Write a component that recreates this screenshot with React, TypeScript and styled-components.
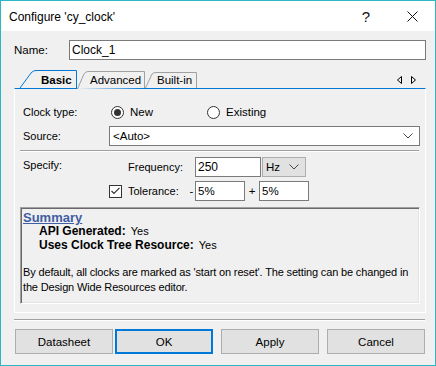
import React, { useState } from 'react';
import styled, { createGlobalStyle } from 'styled-components';

const GlobalStyle = createGlobalStyle`
  html, body {
    margin: 0;
    padding: 0;
    background: #ffffff;
  }
  * {
    box-sizing: border-box;
  }
`;

const Window = styled.div`
  width: 436px;
  height: 366px;
  border: 1px solid #2cb7c7;
  display: flex;
  flex-direction: column;
  font-family: 'Liberation Sans', Arial, sans-serif;
  font-size: 11px;
  color: #000;
  overflow: hidden;
`;

const TitleBar = styled.div`
  height: 30px;
  background: #ffffff;
  display: flex;
  align-items: center;
  padding-left: 8px;
  flex-shrink: 0;
`;

const Title = styled.div`
  flex: 1;
  font-size: 12px;
  padding-top: 1px;
`;

const CaptionButton = styled.div`
  width: 46px;
  height: 30px;
  display: flex;
  align-items: center;
  justify-content: center;
  font-size: 15px;
  color: #111;
`;

const Body = styled.div`
  flex: 1;
  background: #f0f0f0;
  padding: 9px 9px 12px 13px;
  display: flex;
  flex-direction: column;
`;

const NameRow = styled.div`
  display: flex;
  align-items: center;
  height: 20px;
`;

const NameLabel = styled.div`
  width: 55px;
  font-size: 11.5px;
`;

const TextBox = styled.div<{ w?: number; big?: boolean }>`
  height: 20px;
  width: ${p => (p.w ? `${p.w}px` : 'auto')};
  flex: ${p => (p.w ? '0 0 auto' : '1')};
  background: #ffffff;
  border: 1px solid #7a7a7a;
  padding: 0 2px;
  display: flex;
  align-items: center;
  font-size: ${p => (p.big ? 12 : 11.5)}px;
  white-space: nowrap;
`;

const TabStrip = styled.div`
  margin-top: 10px;
  height: 18px;
  display: flex;
  align-items: flex-end;
  padding-left: 6px;
  margin-right: 1px;
`;

const Tab = styled.div<{ w: number; pl: number; active?: boolean }>`
  position: relative;
  width: ${p => p.w}px;
  height: ${p => (p.active ? 18 : 17)}px;
  padding-left: ${p => p.pl}px;
  display: flex;
  align-items: center;
  font-weight: ${p => (p.active ? 700 : 400)};
  font-size: 11.5px;
  flex-shrink: 0;

  span {
    position: relative;
    padding-top: 1px;
  }
`;

const TabShape = styled.svg`
  position: absolute;
  left: 0;
  top: 0;
  overflow: visible;
`;

const TabArrows = styled.div`
  margin-left: auto;
  display: flex;
  gap: 9px;
  align-self: center;
  padding-right: 9px;
  padding-top: 2px;
`;

const TabPanel = styled.div`
  height: 225px;
  border-top: 1px solid #0078d7;
  border-left: 1px solid #ffffff;
  border-right: 1px solid #ffffff;
  border-bottom: 1px solid #ffffff;
  padding: 13px 5px 8px 5px;
  display: flex;
  flex-direction: column;
`;

const FormRow = styled.div<{ mt?: number }>`
  display: flex;
  align-items: center;
  height: 20px;
  margin-top: ${p => p.mt ?? 0}px;
`;

const FieldLabel = styled.div<{ top?: boolean }>`
  width: 89px;
  padding-left: 3px;
  flex-shrink: 0;
  align-self: ${p => (p.top ? 'flex-start' : 'center')};
  padding-top: ${p => (p.top ? 2 : 0)}px;
  font-size: 11px;
`;

const RadioOption = styled.label<{ w?: number }>`
  display: flex;
  align-items: center;
  gap: 6px;
  width: ${p => (p.w ? `${p.w}px` : 'auto')};
  padding-left: 2px;
  font-size: 11.5px;
`;

const RadioCircle = styled.span<{ checked?: boolean }>`
  width: 13px;
  height: 13px;
  border-radius: 50%;
  border: 1px solid #333;
  background: #fff;
  display: flex;
  align-items: center;
  justify-content: center;

  &::after {
    content: '';
    width: 7px;
    height: 7px;
    border-radius: 50%;
    background: ${p => (p.checked ? '#333' : 'transparent')};
  }
`;

const ComboBox = styled.div<{ w?: number; flat?: boolean }>`
  height: 20px;
  width: ${p => (p.w ? `${p.w}px` : 'auto')};
  flex: ${p => (p.w ? '0 0 auto' : '1')};
  background: ${p => (p.flat ? '#e1e1e1' : '#ffffff')};
  border: 1px solid ${p => (p.flat ? '#adadad' : '#7a7a7a')};
  display: flex;
  align-items: center;
  padding: 0 6px 0 3px;
  font-size: 11.5px;
  justify-content: space-between;
`;

const Separator = styled.div<{ mt: number; mb: number }>`
  height: 2px;
  border-top: 1px solid #a0a0a0;
  border-bottom: 1px solid #ffffff;
  margin: ${p => p.mt}px 1px ${p => p.mb}px 0;
`;

const SpecBlock = styled.div`
  display: flex;
`;

const SpecRows = styled.div`
  display: flex;
  flex-direction: column;
  gap: 4px;
`;

const SpecRow = styled.div`
  display: flex;
  align-items: center;
  height: 20px;
`;

const CheckCell = styled.div`
  width: 19px;
  display: flex;
`;

const CheckBox = styled.span`
  width: 13px;
  height: 13px;
  border: 1px solid #333;
  background: #fff;
  display: flex;
  align-items: center;
  justify-content: center;
`;

const SpecLabel = styled.div<{ w: number }>`
  width: ${p => p.w}px;
  font-size: 11px;
`;

const Sign = styled.div<{ w: number }>`
  width: ${p => p.w}px;
  text-align: center;
  font-size: 11.5px;
`;

const SummaryBox = styled.div`
  margin-top: 6px;
  height: 97px;
  border-top: 1px solid #a0a0a0;
  border-left: 1px solid #a0a0a0;
  border-right: 1px solid #ffffff;
  border-bottom: 1px solid #ffffff;
  box-shadow: inset 1px 1px 0 #696969, inset -1px -1px 0 #e3e3e3;
  padding: 3px 3px 0 2px;
  font-size: 11px;
  line-height: 13.5px;
`;

const SummaryTitle = styled.div`
  color: #3f5ea3;
  font-weight: 700;
  font-size: 13px;
  text-decoration: underline;
  line-height: 13px;
  margin-bottom: 1px;
`;

const SummaryItem = styled.div`
  padding-left: 16px;

  b {
    font-weight: 700;
    font-size: 12px;
    margin-right: 5px;
  }
`;

const SummaryNote = styled.div`
  margin-top: 13px;
  line-height: 15px;
  letter-spacing: -0.15px;
`;

const ButtonRow = styled.div`
  margin-top: 8px;
  display: flex;
  padding-left: 1px;
`;

const DialogButton = styled.div<{ primary?: boolean; gapBefore?: number }>`
  width: 98px;
  height: 25px;
  margin-left: ${p => p.gapBefore ?? 0}px;
  background: #e1e1e1;
  border: ${p => (p.primary ? '2px solid #0078d7' : '1px solid #adadad')};
  display: flex;
  align-items: center;
  justify-content: center;
  font-size: 11.5px;
`;

const Chevron = () => (
  <svg width="10" height="6" viewBox="0 0 10 6">
    <polyline points="0.5,0.5 5,5 9.5,0.5" fill="none" stroke="#444" strokeWidth="1" />
  </svg>
);

const tabs = [
  { name: 'Basic', w: 57, pl: 21, path: 'M0,18 L11,3 Q13,0.5 16,0.5 L56.5,0.5 L56.5,18' },
  { name: 'Advanced', w: 68, pl: 13, path: 'M0.5,18 L7,3 Q8.5,0.5 11,0.5 L67.5,0.5 L67.5,17' },
  { name: 'Built-in', w: 52, pl: 12, path: 'M0.5,17 L7,3 Q8.5,1.5 11,1.5 L51.5,1.5 L51.5,17' },
];

const App: React.FC = () => {
  const [active, setActive] = useState('Basic');
  const [clockType, setClockType] = useState<'new' | 'existing'>('new');

  return (
    <>
      <GlobalStyle />
      <Window>
        <TitleBar>
          <Title>Configure 'cy_clock'</Title>
          <CaptionButton>?</CaptionButton>
          <CaptionButton>
            <svg width="11" height="11" viewBox="0 0 11 11">
              <path d="M0.5,0.5 L10.5,10.5 M10.5,0.5 L0.5,10.5" stroke="#111" strokeWidth="1" />
            </svg>
          </CaptionButton>
        </TitleBar>

        <Body>
          <NameRow>
            <NameLabel>Name:</NameLabel>
            <TextBox big>Clock_1</TextBox>
          </NameRow>

          <TabStrip>
            {tabs.map(t => {
              const isActive = t.name === active;
              return (
                <Tab key={t.name} w={t.w} pl={t.pl} active={isActive} onClick={() => setActive(t.name)}>
                  <TabShape width={t.w} height={18}>
                    <path
                      d={t.path}
                      fill="#f0f0f0"
                      stroke={isActive ? '#0078d7' : '#a0a0a0'}
                      strokeWidth="1"
                    />
                  </TabShape>
                  <span>{t.name}</span>
                </Tab>
              );
            })}
            <TabArrows>
              <svg width="5" height="8" viewBox="0 0 5 8">
                <path d="M4.5,0.5 L0.5,4 L4.5,7.5 Z" fill="none" stroke="#000" strokeWidth="1" />
              </svg>
              <svg width="5" height="8" viewBox="0 0 5 8">
                <path d="M0.5,0.5 L4.5,4 L0.5,7.5 Z" fill="none" stroke="#000" strokeWidth="1" />
              </svg>
            </TabArrows>
          </TabStrip>

          <TabPanel>
            <FormRow>
              <FieldLabel>Clock type:</FieldLabel>
              <RadioOption w={96} onClick={() => setClockType('new')}>
                <RadioCircle checked={clockType === 'new'} />
                New
              </RadioOption>
              <RadioOption onClick={() => setClockType('existing')}>
                <RadioCircle checked={clockType === 'existing'} />
                Existing
              </RadioOption>
            </FormRow>

            <FormRow mt={4}>
              <FieldLabel>Source:</FieldLabel>
              <ComboBox>
                <span>&lt;Auto&gt;</span>
                <Chevron />
              </ComboBox>
            </FormRow>

            <Separator mt={4} mb={5} />

            <SpecBlock>
              <FieldLabel top>Specify:</FieldLabel>
              <SpecRows>
                <SpecRow>
                  <CheckCell />
                  <SpecLabel w={67}>Frequency:</SpecLabel>
                  <TextBox w={66} big>250</TextBox>
                  <ComboBox w={44} flat style={{ marginLeft: 1 }}>
                    <span>Hz</span>
                    <Chevron />
                  </ComboBox>
                </SpecRow>
                <SpecRow>
                  <CheckCell>
                    <CheckBox>
                      <svg width="9" height="8" viewBox="0 0 9 8">
                        <polyline points="0.5,4 3,6.5 8.5,0.8" fill="none" stroke="#333" strokeWidth="1.2" />
                      </svg>
                    </CheckBox>
                  </CheckCell>
                  <SpecLabel w={60}>Tolerance:</SpecLabel>
                  <Sign w={7}>-</Sign>
                  <TextBox w={50}>5%</TextBox>
                  <Sign w={14}>+</Sign>
                  <TextBox w={50}>5%</TextBox>
                </SpecRow>
              </SpecRows>
            </SpecBlock>

            <SummaryBox>
              <SummaryTitle>Summary</SummaryTitle>
              <SummaryItem>
                <b>API Generated:</b>Yes
              </SummaryItem>
              <SummaryItem>
                <b>Uses Clock Tree Resource:</b>Yes
              </SummaryItem>
              <SummaryNote>
                By default, all clocks are marked as 'start on reset'. The setting can be changed in
                <br />
                the Design Wide Resources editor.
              </SummaryNote>
            </SummaryBox>
          </TabPanel>

          <Separator mt={6} mb={0} />

          <ButtonRow>
            <DialogButton>Datasheet</DialogButton>
            <DialogButton primary gapBefore={2}>OK</DialogButton>
            <DialogButton gapBefore={8}>Apply</DialogButton>
            <DialogButton gapBefore={8}>Cancel</DialogButton>
          </ButtonRow>
        </Body>
      </Window>
    </>
  );
};

export default App;
